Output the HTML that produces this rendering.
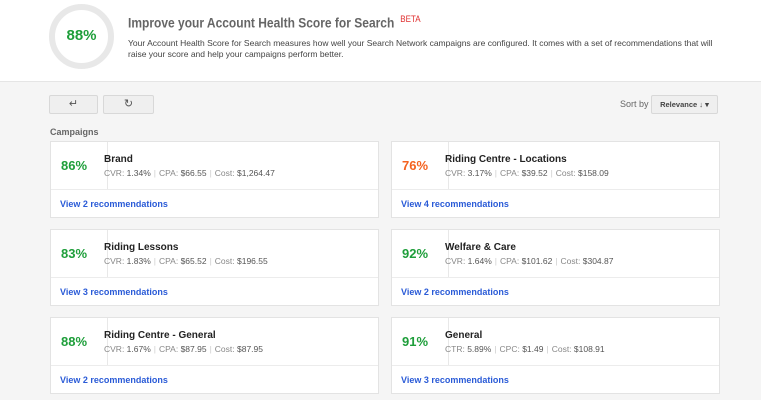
<!DOCTYPE html>
<html><head><style>
*{margin:0;padding:0;box-sizing:border-box}
body{width:761px;height:400px;overflow:hidden;background:#f5f5f5;font-family:"Liberation Sans",Arial,sans-serif;position:relative}
.hdr{position:absolute;left:0;top:0;width:761px;height:82px;background:#fff;border-bottom:1px solid #e5e5e5}
.ring{position:absolute;left:49px;top:4px;width:65px;height:65px;border-radius:50%;border:6px solid #e8e8e8}
.pct{position:absolute;left:49px;top:27px;width:65px;text-align:center;font-size:15px;font-weight:bold;color:#1e9e3a}
.title{position:absolute;left:128px;top:14px;font-size:12px;font-weight:bold;color:#666;transform:scaleY(1.12);transform-origin:left top}
.title sup{color:#e03030;font-size:8px;font-weight:normal;margin-left:6px;vertical-align:5px}
.desc{position:absolute;left:128px;top:38px;font-size:8.5px;line-height:11px;color:#444;width:600px}
.btn{position:absolute;top:95px;height:19px;background:#efefef;border:1px solid #d8d8d8;border-radius:2px;font-size:11px;color:#555;text-align:center;line-height:17px}
.sort{position:absolute;left:620px;top:99px;font-size:9px;color:#666}
.camp{position:absolute;left:50px;top:127px;font-size:9px;color:#666;font-weight:bold}
.card{position:absolute;width:329px;height:77px;background:#fff;border:1px solid #e3e3e3}
.card .p{position:absolute;left:0;top:0;width:57px;height:47px;border-right:1px solid #e8e8e8;font-size:13px;font-weight:bold;color:#1e9e3a;padding:16px 0 0 10px}
.card .p.o{color:#f4621f}
.card .n{position:absolute;left:53px;top:12px;font-size:10px;font-weight:bold;color:#222}
.card .s{position:absolute;left:53px;top:26px;font-size:8.5px;color:#888}
.card .s b{color:#555;font-weight:normal}
.card .s i{font-style:normal;color:#ccc;margin:0 3px}
.card .l{position:absolute;left:0;top:47px;width:100%;height:29px;border-top:1px solid #ececec;font-size:9px;font-weight:bold;color:#2a5bd7;padding:9px 0 0 9px}
</style></head><body>
<div class="hdr">
<div class="ring"></div><div class="pct">88%</div>
<div class="title">Improve your Account Health Score for Search<sup>BETA</sup></div>
<div class="desc">Your Account Health Score for Search measures how well your Search Network campaigns are configured. It comes with a set of recommendations that will raise your score and help your campaigns perform better.</div>
</div>
<div class="btn" style="left:49px;width:49px">&#8629;</div>
<div class="btn" style="left:103px;width:51px">&#8635;</div>
<div class="sort">Sort by</div>
<div class="btn" style="left:651px;top:95px;width:67px;font-size:7.5px;font-weight:bold;color:#444">Relevance &#8595; &#9662;</div>
<div class="camp">Campaigns</div>

<div class="card" style="left:50px;top:141px"><div class="p">86%</div><div class="n">Brand</div><div class="s">CVR: <b>1.34%</b><i>|</i>CPA: <b>$66.55</b><i>|</i>Cost: <b>$1,264.47</b></div><div class="l">View 2 recommendations</div></div>
<div class="card" style="left:391px;top:141px"><div class="p o">76%</div><div class="n">Riding Centre - Locations</div><div class="s">CVR: <b>3.17%</b><i>|</i>CPA: <b>$39.52</b><i>|</i>Cost: <b>$158.09</b></div><div class="l">View 4 recommendations</div></div>
<div class="card" style="left:50px;top:229px"><div class="p">83%</div><div class="n">Riding Lessons</div><div class="s">CVR: <b>1.83%</b><i>|</i>CPA: <b>$65.52</b><i>|</i>Cost: <b>$196.55</b></div><div class="l">View 3 recommendations</div></div>
<div class="card" style="left:391px;top:229px"><div class="p">92%</div><div class="n">Welfare &amp; Care</div><div class="s">CVR: <b>1.64%</b><i>|</i>CPA: <b>$101.62</b><i>|</i>Cost: <b>$304.87</b></div><div class="l">View 2 recommendations</div></div>
<div class="card" style="left:50px;top:317px"><div class="p">88%</div><div class="n">Riding Centre - General</div><div class="s">CVR: <b>1.67%</b><i>|</i>CPA: <b>$87.95</b><i>|</i>Cost: <b>$87.95</b></div><div class="l">View 2 recommendations</div></div>
<div class="card" style="left:391px;top:317px"><div class="p">91%</div><div class="n">General</div><div class="s">CTR: <b>5.89%</b><i>|</i>CPC: <b>$1.49</b><i>|</i>Cost: <b>$108.91</b></div><div class="l">View 3 recommendations</div></div>
</body></html>
